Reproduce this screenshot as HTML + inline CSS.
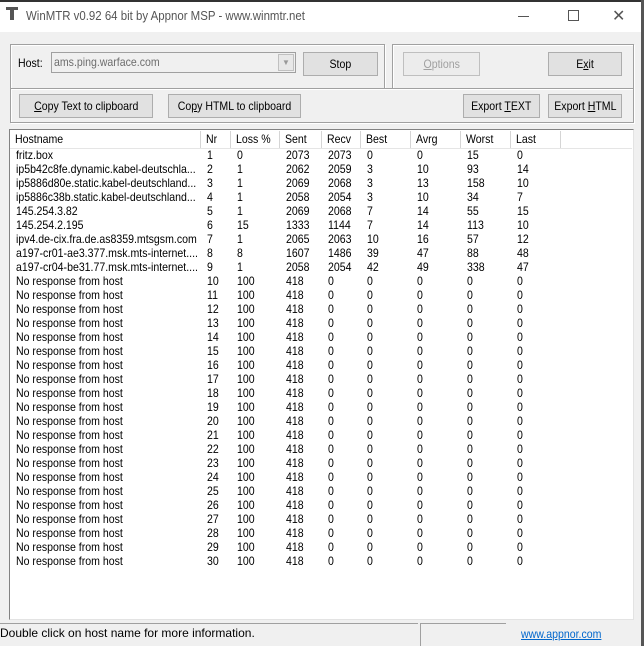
<!DOCTYPE html><html><head><style>
*{box-sizing:border-box;margin:0;padding:0}
body{width:644px;height:646px;background:#f0f0f0;font:11px "Liberation Sans",sans-serif;position:relative;overflow:hidden;color:#000}
.a{position:absolute}
.title{left:0;top:0;width:644px;height:32px;background:#fff}
.grp{border:1px solid #a0a0a0;box-shadow:inset 1px 1px 0 #fff,1px 1px 0 #fff}
.btn{position:absolute;background:#e1e1e1;border:1px solid #adadad;text-align:center;font-size:12px;white-space:nowrap}
.btn span{display:inline-block;transform:scaleX(.88)}
.hd{position:absolute;top:131px;height:17px;border-right:1px solid #d5d5d5;padding-left:5px;line-height:17px;font-size:12px;background:#fff}
.hd span,.c{display:inline-block;transform:scaleX(.88);transform-origin:left}
.row{position:absolute;left:11px;height:14px;line-height:14px;font-size:12px;width:620px}
.row span{position:absolute;top:0;white-space:nowrap;transform:scaleX(.88);transform-origin:left}
</style></head><body>
<div class="a title"></div>
<div class="a" style="left:0;top:0;width:644px;height:2px;background:#333"></div>
<div class="a" style="left:641px;top:0;width:3px;height:646px;background:#555"></div>
<div class="a" style="left:6px;top:7px;width:12px;height:3px;background:#555"></div>
<div class="a" style="left:10px;top:9px;width:4px;height:11px;background:#555"></div>
<div class="a" style="left:26px;top:8px;font-size:13px;color:#555"><span class="c">WinMTR v0.92 64 bit by Appnor MSP - www.winmtr.net</span></div>
<div class="a" style="left:518px;top:16px;width:11px;height:1px;background:#555"></div>
<div class="a" style="left:568px;top:10px;width:11px;height:11px;border:1px solid #555"></div>
<div class="a" style="left:612px;top:6px;font-size:16px;color:#555">✕</div>

<div class="a grp" style="left:10px;top:44px;width:375px;height:58px"></div>
<div class="a grp" style="left:392px;top:44px;width:242px;height:58px"></div>
<div class="a grp" style="left:10px;top:88px;width:624px;height:35px;background:#f0f0f0"></div>
<div class="a" style="left:18px;top:56px;font-size:12px"><span class="c">Host:</span></div>
<div class="a" style="left:51px;top:52px;width:245px;height:21px;border:1px solid #a0a0a0;background:#f0f0f0;color:#6d6d6d;font-size:12px;padding:2px 2px"><span class="c">ams.ping.warface.com</span></div>
<div class="a" style="left:278px;top:54px;width:16px;height:17px;border:1px solid #c0c0c0;background:#e8e8e8;color:#999;font-size:8px;text-align:center;line-height:16px">▼</div>
<div class="btn" style="left:303px;top:52px;width:75px;height:24px;line-height:22px"><span>Stop</span></div>
<div class="btn" style="left:403px;top:52px;width:77px;height:24px;line-height:22px;color:#a0a0a0;border-color:#bfbfbf;background:#ececec"><span><u>O</u>ptions</span></div>
<div class="btn" style="left:548px;top:52px;width:74px;height:24px;line-height:22px"><span>E<u>x</u>it</span></div>
<div class="btn" style="left:19px;top:94px;width:134px;height:24px;line-height:22px"><span><u>C</u>opy Text to clipboard</span></div>
<div class="btn" style="left:168px;top:94px;width:133px;height:24px;line-height:22px"><span>Co<u>p</u>y HTML to clipboard</span></div>
<div class="btn" style="left:463px;top:94px;width:77px;height:24px;line-height:22px"><span>Export <u>T</u>EXT</span></div>
<div class="btn" style="left:548px;top:94px;width:74px;height:24px;line-height:22px"><span>Export <u>H</u>TML</span></div>

<div class="a" style="left:9px;top:129px;width:625px;height:491px;background:#fff;border:1px solid #828282;border-right-color:#e3e3e3;border-bottom-color:#e3e3e3"></div>
<div class="a" style="left:10px;top:148px;width:622px;height:1px;background:#e5e5e5"></div>
<div class="hd" style="left:10px;width:191px"><span>Hostname</span></div>
<div class="hd" style="left:201px;width:30px"><span>Nr</span></div>
<div class="hd" style="left:231px;width:49px"><span>Loss %</span></div>
<div class="hd" style="left:280px;width:42px"><span>Sent</span></div>
<div class="hd" style="left:322px;width:39px"><span>Recv</span></div>
<div class="hd" style="left:361px;width:50px"><span>Best</span></div>
<div class="hd" style="left:411px;width:50px"><span>Avrg</span></div>
<div class="hd" style="left:461px;width:50px"><span>Worst</span></div>
<div class="hd" style="left:511px;width:50px"><span>Last</span></div>
<div id="rows"></div>
<script>
var d=[["fritz.box",1,0,2073,2073,0,0,15,0],["ip5b42c8fe.dynamic.kabel-deutschla...",2,1,2062,2059,3,10,93,14],["ip5886d80e.static.kabel-deutschland...",3,1,2069,2068,3,13,158,10],["ip5886c38b.static.kabel-deutschland...",4,1,2058,2054,3,10,34,7],["145.254.3.82",5,1,2069,2068,7,14,55,15],["145.254.2.195",6,15,1333,1144,7,14,113,10],["ipv4.de-cix.fra.de.as8359.mtsgsm.com",7,1,2065,2063,10,16,57,12],["a197-cr01-ae3.377.msk.mts-internet....",8,8,1607,1486,39,47,88,48],["a197-cr04-be31.77.msk.mts-internet....",9,1,2058,2054,42,49,338,47]];
for(var i=10;i<=30;i++)d.push(["No response from host",i,100,418,0,0,0,0,0]);
var x=[5,196,226,275,317,356,406,456,506],h="";
d.forEach(function(r,k){h+='<div class="row" style="top:'+(148+k*14)+'px">';r.forEach(function(v,j){h+='<span style="left:'+x[j]+'px">'+v+'</span>'});h+='</div>'});
document.getElementById('rows').innerHTML=h;
</script>
<div class="a" style="left:0;top:623px;width:418px;height:1px;background:#a0a0a0"></div>
<div class="a" style="left:0;top:626px;font-size:12px">Double click on host name for more information.</div>
<div class="a" style="left:420px;top:623px;width:1px;height:23px;background:#a0a0a0"></div>
<div class="a" style="left:421px;top:623px;width:85px;height:1px;background:#a0a0a0"></div>
<div class="a" style="left:521px;top:627px;font-size:12px;color:#0066cc"><span class="c" style="text-decoration:underline">www.appnor.com</span></div>
</body></html>
